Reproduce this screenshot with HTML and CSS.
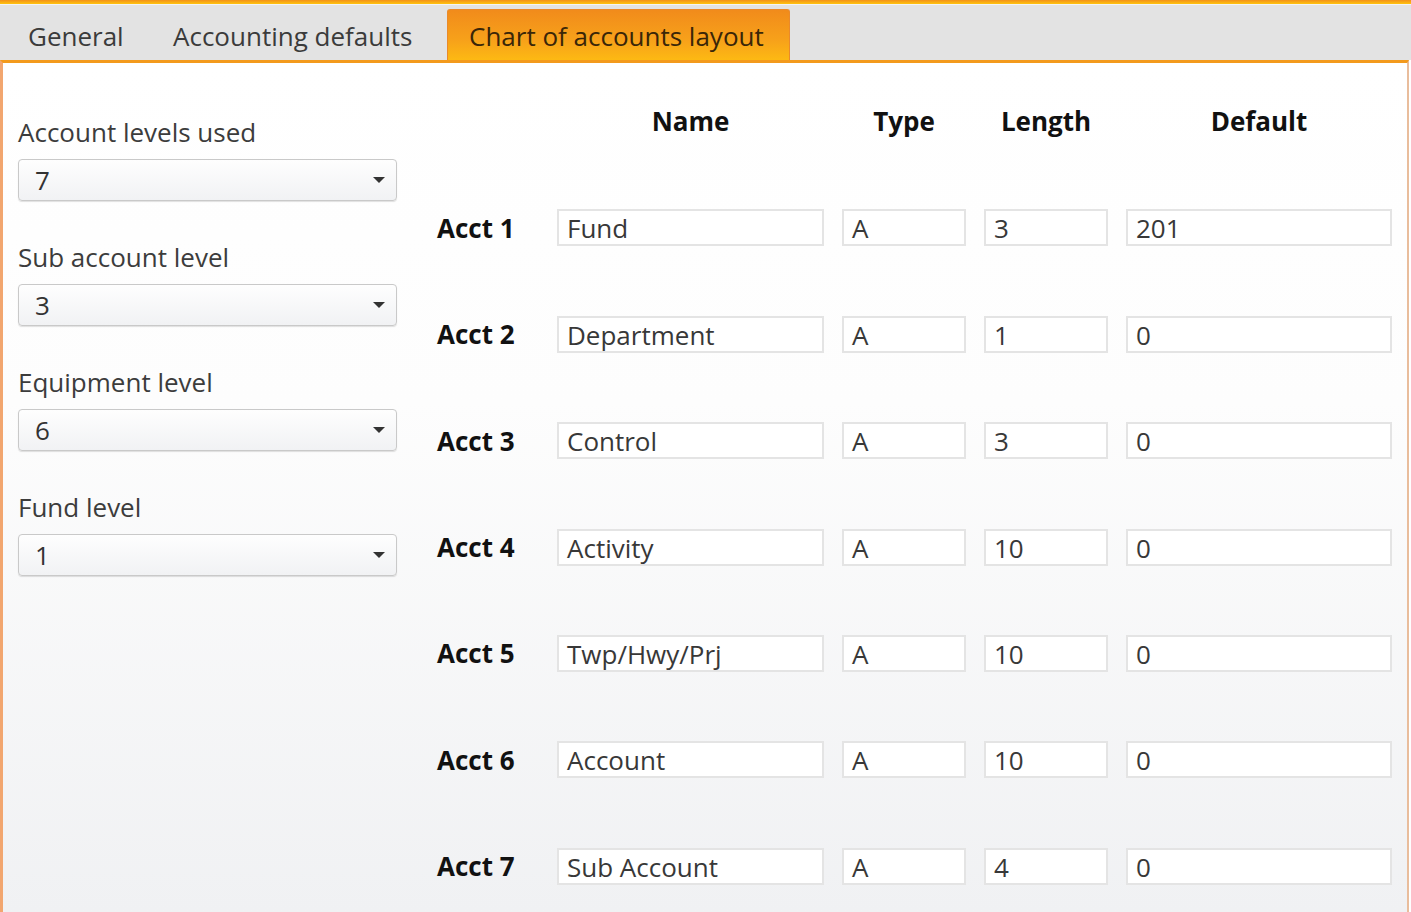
FILE: index.html
```html
<!doctype html>
<html lang="en">
<head>
    <meta charset="UTF-8">
    <title>Chart of accounts layout</title>
    <link rel="stylesheet" href="styles.css">
</head>
<body>
<div class="window">
    <div class="top_line"></div>
    <div class="tab_bar">
        <div class="tab tab_general">General</div>
        <div class="tab tab_defaults">Accounting defaults</div>
        <div class="tab tab_layout active">Chart of accounts layout</div>
    </div>

    <div class="panel">
        <div class="levels">
            <div class="level_label">Account levels used</div>
            <div class="select"><span>7</span><i class="caret"></i></div>

            <div class="level_label">Sub account level</div>
            <div class="select"><span>3</span><i class="caret"></i></div>

            <div class="level_label">Equipment level</div>
            <div class="select"><span>6</span><i class="caret"></i></div>

            <div class="level_label">Fund level</div>
            <div class="select"><span>1</span><i class="caret"></i></div>
        </div>

        <div class="layout">
            <div></div>
            <div class="head">Name</div>
            <div class="head">Type</div>
            <div class="head">Length</div>
            <div class="head">Default</div>

            <div class="acct">Acct 1</div>
            <div class="field">Fund</div>
            <div class="field">A</div>
            <div class="field">3</div>
            <div class="field">201</div>

            <div class="acct">Acct 2</div>
            <div class="field">Department</div>
            <div class="field">A</div>
            <div class="field">1</div>
            <div class="field">0</div>

            <div class="acct">Acct 3</div>
            <div class="field">Control</div>
            <div class="field">A</div>
            <div class="field">3</div>
            <div class="field">0</div>

            <div class="acct">Acct 4</div>
            <div class="field">Activity</div>
            <div class="field">A</div>
            <div class="field">10</div>
            <div class="field">0</div>

            <div class="acct">Acct 5</div>
            <div class="field">Twp/Hwy/Prj</div>
            <div class="field">A</div>
            <div class="field">10</div>
            <div class="field">0</div>

            <div class="acct">Acct 6</div>
            <div class="field">Account</div>
            <div class="field">A</div>
            <div class="field">10</div>
            <div class="field">0</div>

            <div class="acct">Acct 7</div>
            <div class="field">Sub Account</div>
            <div class="field">A</div>
            <div class="field">4</div>
            <div class="field">0</div>
        </div>
    </div>
</div>
</body>
</html>
```

FILE: styles.css
```css
html, body {
    margin: 0;
    height: 100%;
}

body {
    font-family: "Open Sans", "Noto Sans", sans-serif;
    color: #333;
    background: #fff;
}

.window {
    height: 912px;
    display: flex;
    flex-direction: column;
    overflow: hidden;
}

.top_line {
    height: 4px;
    background: linear-gradient(#f39019, #ffc40f);
    border-bottom: 1px solid #f4f4f4;
}

.tab_bar {
    height: 55px;
    background: #e3e3e3;
    display: flex;
    align-items: flex-end;
    padding-left: 7px;
    gap: 8px;
}

.tab {
    box-sizing: border-box;
    height: 51px;
    line-height: 54px;
    padding: 0 21px;
    font-size: 26px;
    color: #3b3b3b;
    white-space: nowrap;
}

.tab_general {
    width: 137px;
}

.tab_defaults {
    width: 287px;
}

.tab_layout {
    width: 343px;
}

.tab.active {
    line-height: 52px;
    background: linear-gradient(#f18b1b, #f7a11a 60%, #fdb913);
    border: 1px solid #ea8a2a;
    border-bottom: none;
    border-radius: 3px 3px 0 0;
    color: #3a2608;
}

.panel {
    flex: 1;
    display: flex;
    align-items: flex-start;
    margin-right: 2px;
    border-top: 3px solid #f39a1c;
    border-left: 3px solid #f2a66f;
    border-right: 2px solid #e9bd9c;
    background: linear-gradient(#fff 0%, #fdfdfd 40%, #f0f1f3 100%);
}

.levels {
    width: 379px;
    margin-left: 15px;
    padding-top: 51px;
}

.level_label {
    height: 36px;
    line-height: 36px;
    font-size: 26px;
    color: #3c3c3c;
    margin-bottom: 9px;
}

.select {
    box-sizing: border-box;
    height: 42px;
    margin-bottom: 38px;
    border: 1px solid #c9c9c9;
    border-radius: 4px;
    background: linear-gradient(#fefefe, #f1f2f4);
    box-shadow: 0 1px 1px rgba(0, 0, 0, 0.12);
    display: flex;
    align-items: center;
    justify-content: space-between;
    padding: 0 11px 0 16px;
    font-size: 26px;
    color: #333;
}

.caret {
    width: 0;
    height: 0;
    border-left: 6px solid transparent;
    border-right: 6px solid transparent;
    border-top: 6px solid #333;
}

.layout {
    margin-left: 40px;
    padding-top: 41px;
    display: grid;
    grid-template-columns: 102px 267px 124px 124px 266px;
    grid-template-rows: 36px;
    grid-auto-rows: 37px;
    column-gap: 18px;
    row-gap: 69.4px;
    align-items: center;
}

.layout .head {
    text-align: center;
    font-size: 26px;
    font-weight: 700;
    color: #111;
    line-height: 36px;
    margin-bottom: 2px;
}

.acct {
    font-size: 26px;
    font-weight: 700;
    color: #111;
    white-space: nowrap;
}

.field {
    box-sizing: border-box;
    height: 37px;
    line-height: 35px;
    border: 2px solid #e4e4e4;
    background: #fff;
    padding-left: 8px;
    font-size: 26px;
    color: #383838;
    white-space: nowrap;
    overflow: hidden;
}
```
